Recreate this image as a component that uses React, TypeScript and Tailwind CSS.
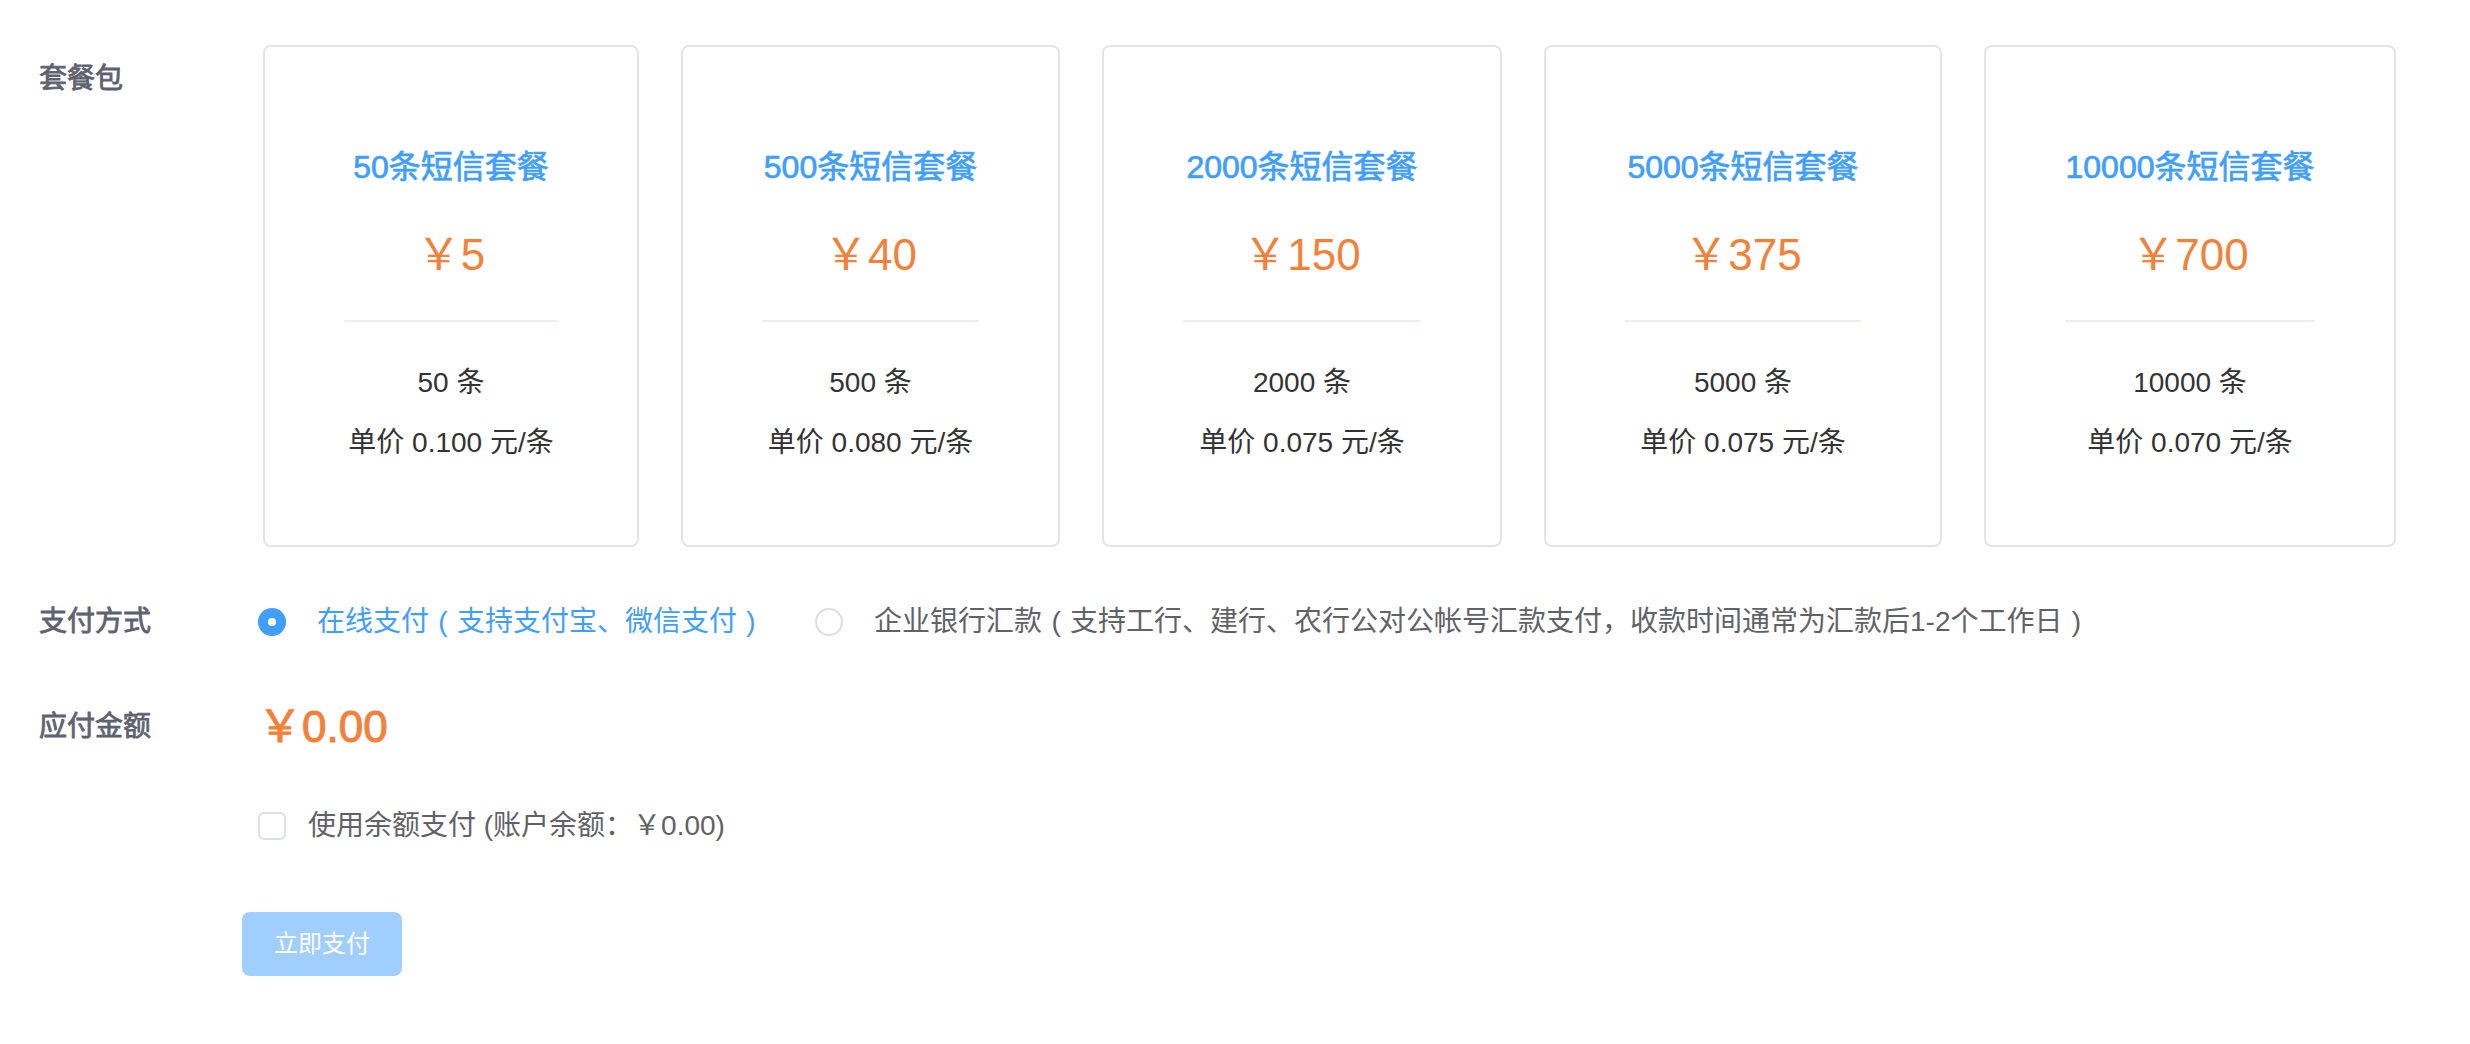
import React from "react";

const packages = [
  { title: "50条短信套餐", price: "5", count: "50 条", unit: "单价 0.100 元/条", w: "w-[376px]" },
  { title: "500条短信套餐", price: "40", count: "500 条", unit: "单价 0.080 元/条", w: "w-[379px]" },
  { title: "2000条短信套餐", price: "150", count: "2000 条", unit: "单价 0.075 元/条", w: "w-[400px]" },
  { title: "5000条短信套餐", price: "375", count: "5000 条", unit: "单价 0.075 元/条", w: "w-[398px]" },
  { title: "10000条短信套餐", price: "700", count: "10000 条", unit: "单价 0.070 元/条", w: "w-[412px]" },
];

function Paren({ children }: { children: React.ReactNode }) {
  return <span className="inline-block w-[28px] text-center">{children}</span>;
}

export default function App() {
  return (
    <div className="min-h-screen bg-white pl-[39px] pt-[45px] font-['Liberation_Sans','Noto_Sans_CJK_SC',sans-serif]">
      {/* 套餐包 */}
      <div className="flex items-start">
        <div className="mt-[14px] w-[219px] text-[28px] leading-[40px] text-[#5e6270] [-webkit-text-stroke:0.8px_currentColor]">套餐包</div>
        <div className="ml-[5px] flex gap-[42px]">
          {packages.map((p) => (
            <div
              key={p.title}
              className={`${p.w} flex h-[502px] flex-col items-center rounded-[8px] border-2 border-[#e2e4e9] px-[79px] pt-[96px]`}
            >
              <div className="whitespace-nowrap text-[32px] leading-[48px] text-[#409eff] [-webkit-text-stroke:0.7px_currentColor]">{p.title}</div>
              <div className="mt-[34px] whitespace-nowrap text-[44px] leading-[60px] text-[#f3813a]">￥{p.price}</div>
              <div className="mt-[35px] h-[2px] self-stretch bg-[#ebeef5]" />
              <div className="mt-[31px] whitespace-nowrap text-[28px] leading-[60px] text-[#333333]">{p.count}</div>
              <div className="whitespace-nowrap text-[28px] leading-[60px] text-[#333333]">{p.unit}</div>
            </div>
          ))}
        </div>
      </div>

      {/* 支付方式 */}
      <div className="mt-[45px] flex h-[60px] items-center">
        <div className="w-[219px] text-[28px] leading-[40px] text-[#5e6270] [-webkit-text-stroke:0.8px_currentColor]">支付方式</div>
        <div className="flex items-center">
          <span className="flex h-[28px] w-[28px] items-center justify-center rounded-full bg-[#409eff]">
            <span className="h-[8px] w-[8px] rounded-full bg-white" />
          </span>
          <span className="ml-[31px] whitespace-nowrap text-[28px] leading-[40px] text-[#409eff]">
            在线支付<Paren>(</Paren>支持支付宝、微信支付<Paren>)</Paren>
          </span>
          <span className="ml-[50px] h-[28px] w-[28px] rounded-full border-2 border-[#dcdfe6] bg-white" />
          <span className="ml-[31px] whitespace-nowrap text-[28px] leading-[40px] text-[#606266]">
            企业银行汇款<Paren>(</Paren>支持工行、建行、农行公对公帐号汇款支付，收款时间通常为汇款后1-2个工作日<Paren>)</Paren>
          </span>
        </div>
      </div>

      {/* 应付金额 */}
      <div className="mt-[45px] flex h-[60px] items-center">
        <div className="w-[219px] text-[28px] leading-[40px] text-[#5e6270] [-webkit-text-stroke:0.8px_currentColor]">应付金额</div>
        <div className="whitespace-nowrap text-[44px] leading-[60px] text-[#f3813a] [-webkit-text-stroke:1px_currentColor]">￥0.00</div>
      </div>

      {/* 使用余额 */}
      <div className="mt-[39px] flex h-[60px] items-center">
        <div className="w-[219px]" />
        <span className="h-[28px] w-[28px] rounded-[6px] border-2 border-[#dcdfe6] bg-white" />
        <span className="ml-[22px] whitespace-nowrap text-[28px] leading-[40px] text-[#606266]">使用余额支付 (账户余额：￥0.00)</span>
      </div>

      {/* 立即支付 */}
      <div className="mt-[56px] flex pb-[60px]">
        <button
          type="button"
          disabled
          className="ml-[203px] h-[64px] w-[160px] rounded-[8px] bg-[#a0cfff] text-[24px] leading-[64px] text-white"
        >
          立即支付
        </button>
      </div>
    </div>
  );
}
